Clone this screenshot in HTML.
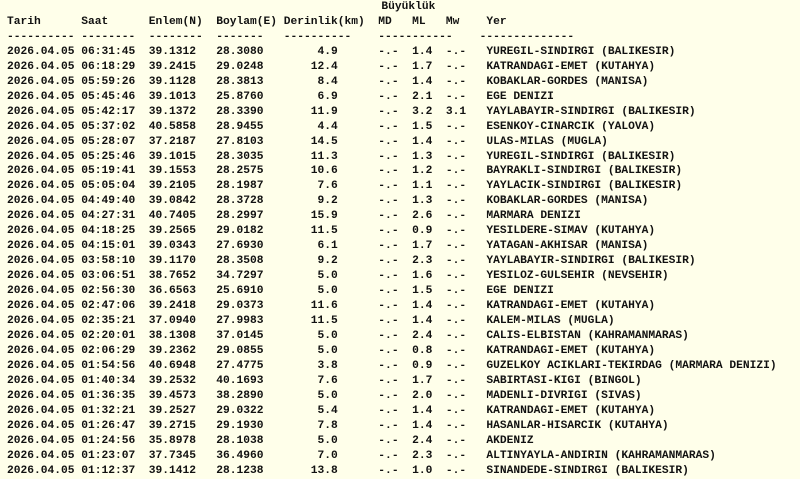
<!DOCTYPE html>
<html><head><meta charset="utf-8"><style>
html,body{margin:0;padding:0;background:#ffffea;width:800px;height:462px;overflow:hidden}
pre{margin:0;position:absolute;left:7px;top:0px;font-family:"Liberation Mono",monospace;font-weight:bold;font-size:11.25px;line-height:14.95px;color:#111}
.b{position:relative;left:3px}
</style></head><body>
<pre>                                                       <span class="b">Büyüklük</span>
Tarih      Saat      Enlem(N)  Boylam(E) Derinlik(km)  MD   ML   Mw    Yer
---------- --------  --------  -------   ----------    -----------    --------------
2026.04.05 06:31:45  39.1312   28.3080        4.9      -.-  1.4  -.-   YUREGIL-SINDIRGI (BALIKESIR)
2026.04.05 06:18:29  39.2415   29.0248       12.4      -.-  1.7  -.-   KATRANDAGI-EMET (KUTAHYA)
2026.04.05 05:59:26  39.1128   28.3813        8.4      -.-  1.4  -.-   KOBAKLAR-GORDES (MANISA)
2026.04.05 05:45:46  39.1013   25.8760        6.9      -.-  2.1  -.-   EGE DENIZI
2026.04.05 05:42:17  39.1372   28.3390       11.9      -.-  3.2  3.1   YAYLABAYIR-SINDIRGI (BALIKESIR)
2026.04.05 05:37:02  40.5858   28.9455        4.4      -.-  1.5  -.-   ESENKOY-CINARCIK (YALOVA)
2026.04.05 05:28:07  37.2187   27.8103       14.5      -.-  1.4  -.-   ULAS-MILAS (MUGLA)
2026.04.05 05:25:46  39.1015   28.3035       11.3      -.-  1.3  -.-   YUREGIL-SINDIRGI (BALIKESIR)
2026.04.05 05:19:41  39.1553   28.2575       10.6      -.-  1.2  -.-   BAYRAKLI-SINDIRGI (BALIKESIR)
2026.04.05 05:05:04  39.2105   28.1987        7.6      -.-  1.1  -.-   YAYLACIK-SINDIRGI (BALIKESIR)
2026.04.05 04:49:40  39.0842   28.3728        9.2      -.-  1.3  -.-   KOBAKLAR-GORDES (MANISA)
2026.04.05 04:27:31  40.7405   28.2997       15.9      -.-  2.6  -.-   MARMARA DENIZI
2026.04.05 04:18:25  39.2565   29.0182       11.5      -.-  0.9  -.-   YESILDERE-SIMAV (KUTAHYA)
2026.04.05 04:15:01  39.0343   27.6930        6.1      -.-  1.7  -.-   YATAGAN-AKHISAR (MANISA)
2026.04.05 03:58:10  39.1170   28.3508        9.2      -.-  2.3  -.-   YAYLABAYIR-SINDIRGI (BALIKESIR)
2026.04.05 03:06:51  38.7652   34.7297        5.0      -.-  1.6  -.-   YESILOZ-GULSEHIR (NEVSEHIR)
2026.04.05 02:56:30  36.6563   25.6910        5.0      -.-  1.5  -.-   EGE DENIZI
2026.04.05 02:47:06  39.2418   29.0373       11.6      -.-  1.4  -.-   KATRANDAGI-EMET (KUTAHYA)
2026.04.05 02:35:21  37.0940   27.9983       11.5      -.-  1.4  -.-   KALEM-MILAS (MUGLA)
2026.04.05 02:20:01  38.1308   37.0145        5.0      -.-  2.4  -.-   CALIS-ELBISTAN (KAHRAMANMARAS)
2026.04.05 02:06:29  39.2362   29.0855        5.0      -.-  0.8  -.-   KATRANDAGI-EMET (KUTAHYA)
2026.04.05 01:54:56  40.6948   27.4775        3.8      -.-  0.9  -.-   GUZELKOY ACIKLARI-TEKIRDAG (MARMARA DENIZI)
2026.04.05 01:40:34  39.2532   40.1693        7.6      -.-  1.7  -.-   SABIRTASI-KIGI (BINGOL)
2026.04.05 01:36:35  39.4573   38.2890        5.0      -.-  2.0  -.-   MADENLI-DIVRIGI (SIVAS)
2026.04.05 01:32:21  39.2527   29.0322        5.4      -.-  1.4  -.-   KATRANDAGI-EMET (KUTAHYA)
2026.04.05 01:26:47  39.2715   29.1930        7.8      -.-  1.4  -.-   HASANLAR-HISARCIK (KUTAHYA)
2026.04.05 01:24:56  35.8978   28.1038        5.0      -.-  2.4  -.-   AKDENIZ
2026.04.05 01:23:07  37.7345   36.4960        7.0      -.-  2.3  -.-   ALTINYAYLA-ANDIRIN (KAHRAMANMARAS)
2026.04.05 01:12:37  39.1412   28.1238       13.8      -.-  1.0  -.-   SINANDEDE-SINDIRGI (BALIKESIR)</pre>
</body></html>
